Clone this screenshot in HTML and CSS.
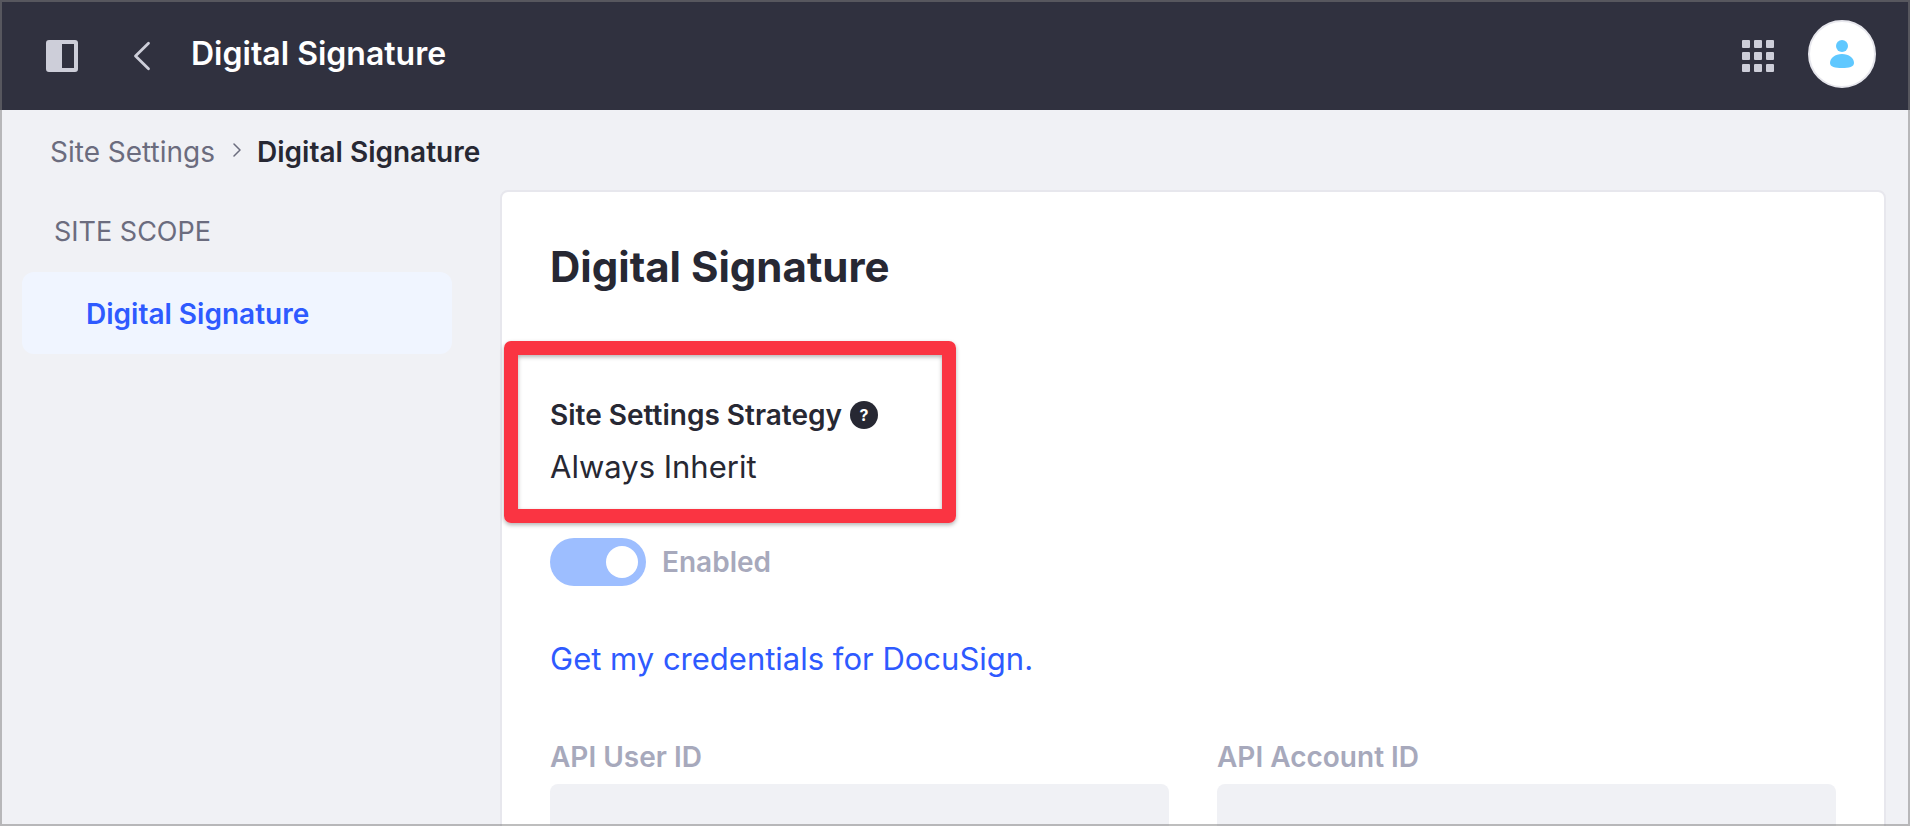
FILE: index.html
```html
<!DOCTYPE html>
<html lang="en">
<head>
<meta charset="utf-8">
<meta name="viewport" content="width=device-width, initial-scale=1">
<title>Digital Signature</title>
<link rel="stylesheet" href="styles.css">
</head>
<body>
<div class="app">
  <header class="topbar">
    <button class="icon-button" type="button" aria-label="Toggle product menu">
      <svg class="icon" viewBox="0 0 32 32" aria-hidden="true"><path fill="currentColor" fill-rule="evenodd" d="M3 0h26a3 3 0 0 1 3 3v26a3 3 0 0 1-3 3H3a3 3 0 0 1-3-3V3a3 3 0 0 1 3-3zm13 4v24h12V4z"/></svg>
    </button>
    <a class="back-link" href="#" aria-label="Back">
      <svg class="icon" viewBox="0 0 32 32" aria-hidden="true"><path fill="none" stroke="currentColor" stroke-width="2.8" stroke-linecap="round" stroke-linejoin="round" d="M22.500 3.200 9.500 16l13 12.800"/></svg>
    </a>
    <span class="topbar-title">Digital Signature</span>
    <div class="topbar-actions">
      <button class="icon-button" type="button" aria-label="Applications">
        <svg class="icon" viewBox="0 0 32 32" fill="currentColor" aria-hidden="true"><rect width="8" height="8" rx="1"/><rect x="12" width="8" height="8" rx="1"/><rect x="24" width="8" height="8" rx="1"/><rect y="12" width="8" height="8" rx="1"/><rect x="12" y="12" width="8" height="8" rx="1"/><rect x="24" y="12" width="8" height="8" rx="1"/><rect y="24" width="8" height="8" rx="1"/><rect x="12" y="24" width="8" height="8" rx="1"/><rect x="24" y="24" width="8" height="8" rx="1"/></svg>
      </button>
      <button class="avatar" type="button" aria-label="User profile">
        <svg class="avatar-icon" viewBox="0 0 24 28" fill="currentColor" aria-hidden="true"><circle cx="12" cy="6" r="6"/><path d="M12 14c7 0 12 4 12 9 0 4-5 5-12 5S0 27 0 23c0-5 5-9 12-9z"/></svg>
      </button>
    </div>
  </header>

  <nav class="breadcrumb" aria-label="Breadcrumb">
    <a class="breadcrumb-link" href="#">Site Settings</a>
    <svg class="breadcrumb-arrow" viewBox="0 0 8 14" aria-hidden="true"><path fill="none" stroke="currentColor" stroke-width="1.500" stroke-linecap="round" stroke-linejoin="round" d="m1 1 6 6-6 6"/></svg>
    <span class="breadcrumb-current" aria-current="page">Digital Signature</span>
  </nav>

  <div class="layout">
    <aside class="sidebar">
      <h2 class="sidebar-heading">SITE SCOPE</h2>
      <a class="sidebar-item" href="#" aria-current="true">Digital Signature</a>
    </aside>

    <main class="sheet">
      <h1 class="sheet-title">Digital Signature</h1>

      <section class="strategy">
        <div class="strategy-label">
          <span>Site Settings Strategy</span>
          <button class="help" type="button" aria-label="Help">?</button>
        </div>
        <p class="strategy-value">Always Inherit</p>
      </section>

      <label class="toggle">
        <input class="toggle-input" type="checkbox" role="switch" checked disabled>
        <span>Enabled</span>
      </label>

      <a class="credentials" href="#">Get my credentials for DocuSign.</a>

      <form class="fields">
        <div class="field">
          <label class="field-label" for="api-user">API User ID</label>
          <input class="field-input" id="api-user" type="text" disabled>
        </div>
        <div class="field">
          <label class="field-label" for="api-account">API Account ID</label>
          <input class="field-input" id="api-account" type="text" disabled>
        </div>
      </form>
    </main>
  </div>
</div>
</body>
</html>
```

FILE: styles.css
```css
* {
  box-sizing: border-box;
}

body {
  margin: 0;
  background: #f0f1f5;
  color: #272833;
  font-family: Inter, "Liberation Sans", sans-serif;
  font-size: 28px;
  line-height: 36px;
}

a {
  color: inherit;
  text-decoration: none;
}

button {
  padding: 0;
  border: 0;
  background: none;
  color: inherit;
  font-family: inherit;
}

.app {
  display: flex;
  flex-direction: column;
  height: 100vh;
  overflow: hidden;
}

.app::after {
  content: "";
  position: fixed;
  inset: 0;
  border: 2px solid rgba(125, 125, 125, 0.5);
  pointer-events: none;
}

.topbar {
  display: flex;
  align-items: center;
  flex-shrink: 0;
  height: 110px;
  padding: 0 34px 2px 46px;
  background: #30313f;
  color: #cdced9;
}

.icon {
  display: block;
  width: 32px;
  height: 32px;
}

.icon-button,
.back-link {
  padding-top: 4px;
}

.back-link {
  margin: 0 33px 0 48px;
}

.topbar-title {
  color: #fff;
  font-size: 32px;
  font-weight: 600;
}

.topbar-actions {
  display: flex;
  align-items: center;
  gap: 34px;
  margin-left: auto;
}

.avatar {
  display: flex;
  align-items: center;
  justify-content: center;
  width: 68px;
  height: 68px;
  border: 2px solid #e7e7ed;
  border-radius: 50%;
  background: #fff;
  color: #5fc8ff;
}

.avatar-icon {
  width: 24px;
  height: 28px;
}

.breadcrumb {
  display: flex;
  align-items: center;
  flex-shrink: 0;
  height: 80px;
  padding: 4px 50px 0;
}

.breadcrumb-link {
  color: #6b6c7e;
}

.breadcrumb-arrow {
  width: 8px;
  height: 14px;
  margin: 0 16px 4px 18px;
  color: #6b6c7e;
}

.breadcrumb-current {
  font-weight: 600;
}

.layout {
  display: grid;
  grid-template-columns: 500px 1fr;
  flex: 1 0 auto;
  padding-right: 24px;
}

.sidebar {
  padding: 24px 48px 0 22px;
}

.sidebar-heading {
  margin: 0 0 22px;
  padding-left: 32px;
  color: #6b6c7e;
  font-size: 27px;
  font-weight: 400;
}

.sidebar-item {
  display: block;
  padding: 24px 64px 22px;
  border-radius: 12px;
  background: #f0f5ff;
  color: #2e5aff;
  font-weight: 600;
}

.sheet {
  padding: 48px;
  border: 2px solid #e7e7ed;
  border-radius: 8px;
  background: #fff;
}

.sheet-title {
  margin: 0 0 104px;
  font-size: 42px;
  font-weight: 700;
  line-height: 53px;
}

.strategy {
  position: relative;
  width: 360px;
  margin-bottom: 47px;
}

.strategy::after {
  content: "";
  position: absolute;
  inset: -56px -46px -32px;
  border: 14px solid #fa3442;
  border-radius: 7px;
  box-shadow: 0 2px 4px rgba(0, 0, 0, 0.3), inset 0 2px 4px rgba(0, 0, 0, 0.3);
  pointer-events: none;
}

.strategy-label {
  display: flex;
  align-items: center;
  gap: 8px;
  margin-bottom: 10px;
  font-weight: 600;
  white-space: nowrap;
}

.help {
  width: 28px;
  height: 28px;
  border-radius: 50%;
  background: #272833;
  color: #fff;
  font-size: 16px;
  font-weight: 700;
  line-height: 28px;
}

.strategy-value {
  margin: 0;
  font-size: 31px;
  line-height: 48px;
}

.toggle {
  display: flex;
  align-items: center;
  gap: 16px;
  margin-bottom: 49px;
  color: #a7a9bc;
  font-weight: 600;
}

.toggle-input {
  display: flex;
  justify-content: flex-end;
  width: 96px;
  height: 48px;
  margin: 0;
  padding: 8px;
  border-radius: 24px;
  background: #9dbeff;
  appearance: none;
}

.toggle-input::before {
  content: "";
  width: 32px;
  height: 32px;
  border-radius: 50%;
  background: #fff;
}

.credentials {
  display: block;
  margin-bottom: 56px;
  color: #2e5aff;
  font-size: 31px;
  line-height: 48px;
}

.fields {
  display: grid;
  grid-template-columns: 1fr 1fr;
  gap: 48px;
}

.field {
  display: flex;
  flex-direction: column;
  gap: 9px;
}

.field-label {
  color: #a7a9bc;
  font-weight: 600;
}

.field-input {
  width: 100%;
  height: 80px;
  padding: 0 24px;
  border: 0;
  border-radius: 8px;
  background: #f0f1f5;
  font: inherit;
}
```
